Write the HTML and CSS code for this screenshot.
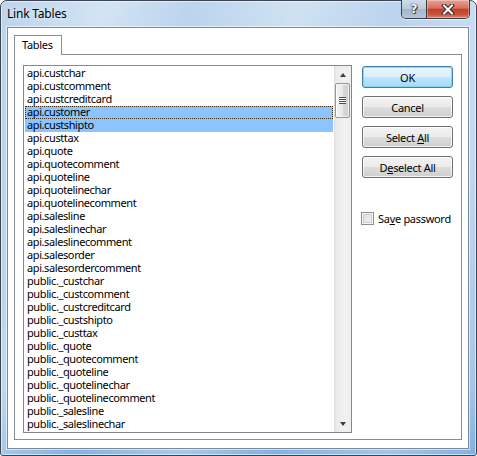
FILE: index.html
```html
<!DOCTYPE html>
<html>
<head>
<meta charset="utf-8">
<title>Link Tables</title>
<link rel="stylesheet" href="styles.css">
</head>
<body>
<div class="window">
  <div class="titlebar">
    <span class="title">Link Tables</span>
    <div class="caption-btns">
      <div class="cbtn help">?</div>
      <div class="cbtn close">
        <svg width="14" height="11" viewBox="0 0 14 11">
          <path d="M3 1.5 L11 9.5 M11 1.5 L3 9.5" stroke="#3a2a2a" stroke-width="4" stroke-linecap="square" fill="none"/>
          <path d="M3 1.5 L11 9.5 M11 1.5 L3 9.5" stroke="#ffffff" stroke-width="2" stroke-linecap="square" fill="none"/>
        </svg>
      </div>
    </div>
  </div>
  <div class="client">
    <div class="tabs"><div class="tab">Tables</div></div>
    <div class="panel">
      <div class="listbox">
        <div class="items">
          <div class="row">api.custchar</div>
          <div class="row">api.custcomment</div>
          <div class="row">api.custcreditcard</div>
          <div class="row sel focus">api.customer</div>
          <div class="row sel">api.custshipto</div>
          <div class="row">api.custtax</div>
          <div class="row">api.quote</div>
          <div class="row">api.quotecomment</div>
          <div class="row">api.quoteline</div>
          <div class="row">api.quotelinechar</div>
          <div class="row">api.quotelinecomment</div>
          <div class="row">api.salesline</div>
          <div class="row">api.saleslinechar</div>
          <div class="row">api.saleslinecomment</div>
          <div class="row">api.salesorder</div>
          <div class="row">api.salesordercomment</div>
          <div class="row">public._custchar</div>
          <div class="row">public._custcomment</div>
          <div class="row">public._custcreditcard</div>
          <div class="row">public._custshipto</div>
          <div class="row">public._custtax</div>
          <div class="row">public._quote</div>
          <div class="row">public._quotecomment</div>
          <div class="row">public._quoteline</div>
          <div class="row">public._quotelinechar</div>
          <div class="row">public._quotelinecomment</div>
          <div class="row">public._salesline</div>
          <div class="row">public._saleslinechar</div>
        </div>
        <div class="scrollbar">
          <div class="sb-btn"><span class="arrow up"></span></div>
          <div class="thumb"><span class="grip"></span></div>
          <div class="track"></div>
          <div class="sb-btn"><span class="arrow down"></span></div>
        </div>
      </div>
      <div class="side">
        <div class="btn default"><span>OK</span></div>
        <div class="btn"><span>Cancel</span></div>
        <div class="btn"><span>Select <u>A</u>ll</span></div>
        <div class="btn"><span>D<u>e</u>select All</span></div>
        <label class="check"><span class="box"></span><span>Sa<u>v</u>e password</span></label>
      </div>
    </div>
  </div>
</div>
</body>
</html>
```

FILE: styles.css
```css
html, body {
  margin: 0;
  padding: 0;
  background: #ffffff;
}

.window {
  width: 477px;
  height: 456px;
  box-sizing: border-box;
  border: 1px solid #3b4450;
  border-radius: 7px 7px 3px 3px;
  padding: 0 7px 6px 6px;
  display: flex;
  flex-direction: column;
  font-family: "Noto Sans", "Liberation Sans", sans-serif;
  background:
    linear-gradient(105deg, rgba(255,255,255,0) 0%, rgba(255,255,255,0.35) 18%, rgba(255,255,255,0) 32%, rgba(255,255,255,0.3) 50%, rgba(255,255,255,0) 66%, rgba(255,255,255,0.25) 85%, rgba(255,255,255,0) 100%),
    linear-gradient(#bcd5ee, #aecbea 40%, #9fc2e8 85%, #7fb2e2);
  box-shadow: inset 0 0 0 1px rgba(255,255,255,0.55);
}

.titlebar {
  height: 26px;
  display: flex;
  justify-content: space-between;
  align-items: flex-start;
}

.title {
  font-size: 12px;
  line-height: 16px;
  padding-top: 5px;
  color: #000;
  letter-spacing: -0.2px;
  text-shadow: 0 0 6px rgba(255,255,255,0.9);
}

.caption-btns {
  display: flex;
  margin: -1px -1px 0 0;
  border: 1px solid #3c3c44;
  border-top: none;
  border-radius: 0 0 5px 5px;
  overflow: hidden;
  height: 18px;
  box-shadow: 0 1px 0 rgba(255,255,255,0.6);
}

.cbtn {
  height: 18px;
  display: flex;
  align-items: center;
  justify-content: center;
  box-sizing: border-box;
}

.help {
  width: 25px;
  border-right: 1px solid #3c3c44;
  background: linear-gradient(#cfdcea, #b9c9dc 50%, #a4b6cc 52%, #b5c6d9);
  color: #fff;
  font-family: "DejaVu Sans", sans-serif;
  font-weight: bold;
  font-size: 12px;
  text-shadow: 0 0 1px #222, 0 0 1px #222, 1px 1px 1px #333;
}

.close {
  width: 42px;
  background: linear-gradient(#e8a397, #d6705f 45%, #c5402b 52%, #c9533c 80%, #d98a73);
  box-shadow: inset 0 0 0 1px rgba(255,255,255,0.3);
}

.client {
  flex: 1;
  border: 1px solid #7c8896;
  background: #ffffff;
  box-shadow: 0 0 0 1px rgba(255,255,255,0.6);
  padding: 7px 6px 8px 6px;
  display: flex;
  flex-direction: column;
}

.tabs {
  height: 19px;
  display: flex;
}

.tab {
  width: 48px;
  height: 20px;
  box-sizing: border-box;
  border: 1px solid #898c95;
  border-bottom: none;
  background: #ffffff;
  position: relative;
  z-index: 1;
  font-size: 11px;
  line-height: 18px;
  padding-left: 7px;
  letter-spacing: -0.3px;
  color: #000;
}

.panel {
  flex: 1;
  border: 1px solid #898c95;
  background: #ffffff;
  display: flex;
  padding: 10px 8px 6px 8px;
  gap: 10px;
}

.listbox {
  width: 329px;
  box-sizing: border-box;
  border: 1px solid #828790;
  display: flex;
  overflow: hidden;
}

.items {
  flex: 1;
  padding: 1px 1px 0 1px;
  overflow: hidden;
}

.row {
  height: 13px;
  line-height: 12px;
  padding-left: 2px;
  font-size: 11px;
  letter-spacing: -0.4px;
  color: #000;
  white-space: nowrap;
  box-sizing: border-box;
}

.row.sel {
  background: #8cc4ff;
}

.row.focus {
  outline: 1px dotted #3a2a10;
  outline-offset: -1px;
}

.scrollbar {
  width: 17px;
  display: flex;
  flex-direction: column;
  background: linear-gradient(to right, #dcdcdc, #ebebeb 2px, #f1f1f1 60%, #eeeeee);
}

.sb-btn {
  height: 17px;
  display: flex;
  align-items: center;
  justify-content: center;
}

.arrow {
  width: 0;
  height: 0;
  border-left: 3.5px solid transparent;
  border-right: 3.5px solid transparent;
}

.arrow.up {
  border-bottom: 4px solid #3e3e3e;
}

.arrow.down {
  border-top: 4px solid #3e3e3e;
}

.thumb {
  height: 35px;
  margin: 0 1px;
  box-sizing: border-box;
  border: 1px solid #959595;
  border-radius: 2px;
  background: linear-gradient(to right, #f4f4f4, #e9e9e9 50%, #d8d8d8 52%, #cfcfcf);
  box-shadow: inset 0 0 0 1px rgba(255,255,255,0.7);
  display: flex;
  align-items: center;
  justify-content: center;
}

.grip {
  width: 7px;
  height: 7px;
  background: repeating-linear-gradient(#505050 0 1px, #f6f6f6 1px 2px);
}

.track {
  flex: 1;
}

.side {
  width: 91px;
  display: flex;
  flex-direction: column;
  gap: 8px;
  padding-top: 1px;
}

.btn {
  height: 22px;
  box-sizing: border-box;
  border: 1px solid #707070;
  border-radius: 3px;
  background: linear-gradient(#f3f3f3, #ebebeb 48%, #dddddd 52%, #cfcfcf);
  box-shadow: inset 0 0 0 1px rgba(255,255,255,0.75);
  display: flex;
  align-items: center;
  justify-content: center;
  font-size: 11px;
  color: #000;
  letter-spacing: -0.3px;
}

.btn.default {
  border-color: #3c7fb1;
  background: linear-gradient(#eaf6fd, #d9f0fc 48%, #bee6fd 52%, #a7d9f5);
  box-shadow: inset 0 0 0 1px rgba(120,210,245,0.8);
}

.check {
  margin-top: 25px;
  display: flex;
  align-items: center;
  gap: 4px;
  font-size: 11px;
  color: #000;
  letter-spacing: -0.3px;
  margin-left: -1px;
}

.box {
  width: 13px;
  height: 13px;
  box-sizing: border-box;
  border: 1px solid #8f8f8f;
  background: linear-gradient(135deg, #dcdcdc, #f4f4f4);
  box-shadow: inset 0 0 0 1px #f4f4f4, inset 0 0 0 2px #cfcfcf;
}

u {
  text-decoration-thickness: 1px;
  text-underline-offset: 1px;
}
```
